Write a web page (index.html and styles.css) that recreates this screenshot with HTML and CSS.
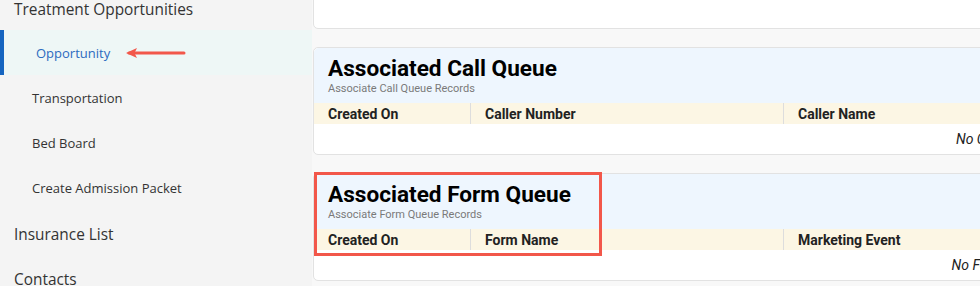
FILE: index.html
```html
<!DOCTYPE html>
<html lang="en">
<head>
  <meta charset="UTF-8" />
  <meta name="viewport" content="width=device-width, initial-scale=1.0"/>
  <title>Associated Queues</title>
  <link rel="stylesheet" href="styles.css">
</head>
<body>
  <aside class="sidebar">
    <ul class="nav">
      <li class="nav-group">Treatment Opportunities</li>
      <li class="nav-item active">
        <span>Opportunity</span>
        <svg class="arrow" width="62" height="12" viewBox="0 0 62 12">
          <path d="M4 6 H59" stroke="#f2574a" stroke-width="3" stroke-linecap="round"/>
          <path d="M1 6 L12 1 L9.5 6 L12 11 Z" fill="#f2574a"/>
        </svg>
      </li>
      <li class="nav-item">Transportation</li>
      <li class="nav-item">Bed Board</li>
      <li class="nav-item">Create Admission Packet</li>
      <li class="nav-group">Insurance List</li>
      <li class="nav-group">Contacts</li>
    </ul>
  </aside>

  <main class="content">
    <div class="card card-top"></div>

    <section class="card">
      <div class="card-head">
        <h2>Associated Call Queue</h2>
        <p>Associate Call Queue Records</p>
      </div>
      <div class="cols">
        <div class="col c1">Created On</div>
        <div class="col c2">Caller Number</div>
        <div class="col c3">Caller Name</div>
      </div>
      <div class="empty">No Call Queue Records Found</div>
    </section>

    <section class="card">
      <div class="card-head">
        <h2>Associated Form Queue</h2>
        <p>Associate Form Queue Records</p>
      </div>
      <div class="cols">
        <div class="col c1">Created On</div>
        <div class="col c2">Form Name</div>
        <div class="col c3">Marketing Event</div>
      </div>
      <div class="empty">No Form Queue Records Found</div>
      <div class="highlight"></div>
    </section>
  </main>
</body>
</html>
```

FILE: styles.css
```css
body {
  margin: 0;
  display: flex;
  height: 286px;
  overflow: hidden;
  font-family: 'Open Sans', sans-serif;
  background: #f8f8f8;
}

.sidebar {
  width: 312px;
  flex-shrink: 0;
  background: #f4f4f4;
}

.nav {
  list-style: none;
  margin: -15px 0 0 0;
  padding: 0;
}

.nav li {
  height: 45px;
  box-sizing: border-box;
  display: flex;
  align-items: center;
  color: #333;
}

.nav-group {
  padding: 3px 0 0 14px;
  font-size: 15.4px;
}

.nav-item {
  padding-left: 32px;
  font-size: 13px;
}

.nav-item.active {
  padding-left: 32px;
  border-left: 4px solid #1565c0;
  background: #eef7f6;
  color: #2c6bc0;
}

.arrow {
  margin-left: 15px;
}

.content {
  flex: 1;
  min-width: 0;
  padding-left: 1px;
  overflow: hidden;
}

.card {
  position: relative;
  width: 1464px;
  margin-bottom: 18px;
  background: #fff;
  border: 1px solid #e2e2e2;
  border-radius: 5px;
  font-family: 'Roboto', sans-serif;
}

.card-top {
  height: 40px;
  margin-top: -13px;
}

.card-head {
  height: 55px;
  padding: 7px 14px 0;
  box-sizing: border-box;
  background: #eef6fe;
  border-radius: 5px 5px 0 0;
}

.card-head h2 {
  margin: 0;
  font-size: 22.6px;
  line-height: 27px;
  font-weight: 700;
  color: #000;
}

.card-head p {
  margin: 0;
  font-size: 11px;
  line-height: 13px;
  color: #7a7a7a;
}

.cols {
  display: flex;
  height: 21px;
  background: #fcf6e4;
}

.col {
  display: flex;
  align-items: center;
  font-size: 14px;
  font-weight: 700;
  color: #222;
}

.c1 {
  width: 156px;
  padding-left: 14px;
  box-sizing: border-box;
}

.c2 {
  width: 313px;
  padding-left: 14px;
  box-sizing: border-box;
  border-left: 1px solid #ddd;
}

.c3 {
  flex: 1;
  padding-left: 14px;
  border-left: 1px solid #ddd;
}

.empty {
  height: 30px;
  display: flex;
  align-items: center;
  justify-content: center;
  font-size: 14px;
  font-style: italic;
  color: #222;
}

.highlight {
  position: absolute;
  left: 0;
  top: -2px;
  width: 288px;
  height: 84px;
  border: 3px solid #f2574a;
  box-sizing: border-box;
}
```
